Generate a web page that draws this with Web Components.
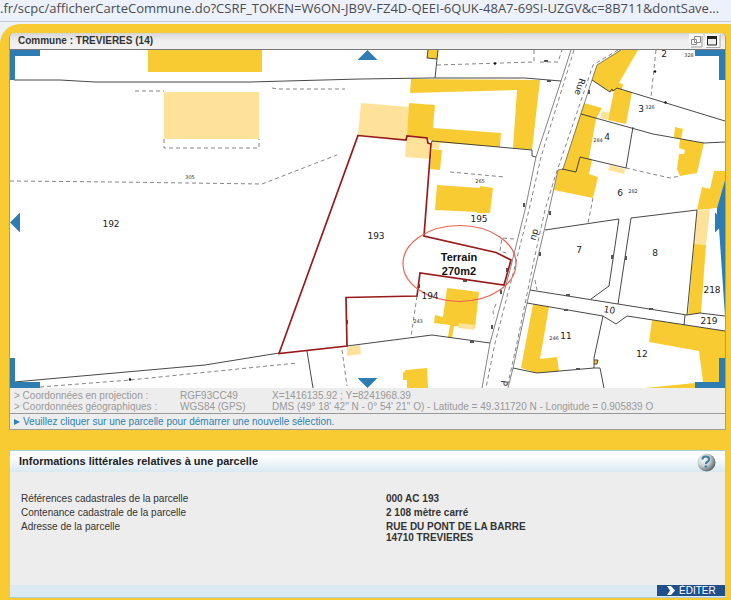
<!DOCTYPE html>
<html lang="fr">
<head>
<meta charset="utf-8">
<title>Commune : TREVIERES (14)</title>
<style>
  body { margin: 0; background: #eef1f5; font: 10px/11px "Liberation Sans", Arial, sans-serif; color: #333; }
  main { background: #f9cb33; border-top-left-radius: 20px; padding: 9px 5px 2px 9px; display: flex; flex-direction: column; gap: 20px; }
</style>
</head>
<body>
<address-bar></address-bar>
<main>
  <map-window>
    <span slot="title">Commune : TREVIERES (14)</span>
    <cadastre-map></cadastre-map>
    <coord-list slot="status"></coord-list>
    <span slot="message">Veuillez cliquer sur une parcelle pour démarrer une nouvelle sélection.</span>
  </map-window>
  <info-panel>
    <span slot="title">Informations littérales relatives à une parcelle</span>
    <parcel-details></parcel-details>
  </info-panel>
</main>

<script>
class AddressBar extends HTMLElement {
  constructor() {
    super();
    this.attachShadow({ mode: 'open' });
    this.shadowRoot.innerHTML = `
      <style>
        :host { display: block; background: #edf1fb; border-bottom: 1px solid #c3c7cd; height: 21px; margin-bottom: 2px; overflow: hidden; }
        input {
          display: block; width: 100%; box-sizing: border-box; border: 0; padding: 0; margin: 0;
          height: 17px; background: none; color: #494c50; font: 13px/17px "Open Sans", sans-serif;
        }
      </style>
      <input type="text" aria-label="Adresse" readonly
        value=".fr/scpc/afficherCarteCommune.do?CSRF_TOKEN=W6ON-JB9V-FZ4D-QEEI-6QUK-48A7-69SI-UZGV&amp;c=8B711&amp;dontSave...">
    `;
  }
}

class MapWindow extends HTMLElement {
  constructor() {
    super();
    this.attachShadow({ mode: 'open' });
    this.shadowRoot.innerHTML = `
      <style>
        :host { display: block; border: 1px solid #9d9d9d; border-top: 0; border-radius: 5px 5px 0 0; background: #ededed; }
        header {
          display: flex; align-items: center; height: 16px; padding: 0 4px 0 8px;
          background: linear-gradient(#d6d6d6, #efefef 50%, #f1f1f1);
          border-bottom: 1px solid #777; border-radius: 5px 5px 0 0;
        }
        h1 { flex: 1; margin: 0; font: bold 10px/16px "Liberation Sans", Arial, sans-serif; color: #333; }
        button { display: block; width: 16px; height: 14px; padding: 0; border: 0; background: none; }
        svg { display: block; }
        footer { display: flex; align-items: center; gap: 3px; height: 15px; padding-left: 4px; border-top: 1px solid #999; color: #2c83b4; }
      </style>
      <header>
        <h1><slot name="title"></slot></h1>
        <button type="button" aria-label="Restaurer">
          <svg width="16" height="14"><path d="M0 0h14v14H0z" fill="#fafafa"/><path d="M2 13h11V2" fill="none" stroke="#999"/><path d="M5.500 2.500h6v6h-6zM2.500 5.500h5v5h-5z" fill="#fff" stroke="#888"/></svg>
        </button>
        <button type="button" aria-label="Agrandir">
          <svg width="16" height="14"><path d="M0 0h15v14H0z" fill="#fafafa"/><path d="M1 13.500h14V1" fill="none" stroke="#aaa"/><path d="M2.500 3h9v8h-9z" fill="#eee" stroke="#222"/><path d="M2 2h10v3H2z" fill="#222"/></svg>
        </button>
      </header>
      <slot></slot>
      <slot name="status"></slot>
      <footer>
        <svg width="6" height="6" aria-hidden="true"><path d="M0 0l6 3-6 3z" fill="#2c83b4"/></svg>
        <slot name="message"></slot>
      </footer>
    `;
  }
}

// Parcel boundaries, buildings and labels, all in the same coordinate space
const BUILDINGS = [
  '148,50 262,50 262,72 148,72',
  '411,79 540,80 532,150 513,148 517,90 410,93',
  '409,103 435,105 433,128 501,133 500,147 433,142 427,138 407,136',
  '432,149 442,150 440,170 430,169',
  '437,185 480,188 480,186 493,188 490,213 477,213 477,212 435,210',
  '447,288 479,292 475,328 454,326 452,338 448,337 450,325 434,323 435,315 443,317',
  '403,373 406,370 427,368 428,388 407,388 407,380 403,380',
  '620,50 638,50 619,83 623,84 622,90 632,92 626,124 608,120 614,91 610,92 592,80 597,65',
  '584,103 602,108 596,119 589,158 592,160 589,174 598,177 593,198 554,190 558,170 563,169 580,115',
  '675,127 683,129 681,139 704,143 697,173 680,176 677,169 679,154 684,154 685,150 679,148 680,139 674,137',
  '714,171 725,171 725,180 717,208 697,210 702,187 710,189',
  '694,244 706,245 701,313 688,315',
  '652,320 725,331 725,388 645,388 695,383 703,382 699,351 649,342',
  '533,304 549,307 540,359 557,357 559,371 537,373 521,368'
];
const ANNEXES = [
  '164,92 259,92 259,139 164,139',
  '361,103 409,107 407,140 358,135',
  '406,140 407,137 427,138 429,143 431,144 430,159 405,157',
  '432,141 440,143 439,149 432,148',
  '602,111 610,113 607,120 600,118',
  '610,165 625,169 624,174 608,170',
  '697,211 710,209 706,245 694,244',
  '347,347 360,345 361,354 347,356'
];
const LIMITS = [
  '14,80 60,80 95,82 250,82 360,79 430,78 525,78 561,81',
  '437,59 435,78',
  '428,50 427,58 437,59 438,50',
  '431,144 432,141 532,150 532,156 536,157',
  '592,80 610,92 612,89 613,91 617,88 725,121',
  '581,114 653,134 704,143 725,142',
  '633,127 626,168',
  '562,169 576,172 580,157 626,168',
  '545,230 619,219 609,286 591,299',
  '618,304 631,218 697,210 687,315',
  '530,290 687,315 700,313 725,316',
  '685,315 684,325',
  '527,303 603,316 616,324 627,316 725,331',
  '603,316 594,358 594,368 600,368 604,388',
  '594,360 598,360 597,364 594,364',
  '513,368 537,373 594,368',
  '14,382 205,365 279,353',
  '347,346 432,335 490,343',
  '307,351 313,388'
];
const ROADSIDES = [
  '571,50 561,81 536,157 525,210 510,270 490,343 482,388',
  '621,50 597,65 592,80 563,169 558,170 549,210 527,303 513,368 508,388'
];
const DASHES = [
  '574,50 541,157 529,210 514,270 495,343 486,388',
  '618,50 593,65 588,80 554,180 545,210 534,260 517,343 507,388',
  '135,91 164,91', '272,88 279,89 345,89', '164,139 164,148 259,148 259,139',
  '10,181 115,182 262,184 337,155',
  '437,65 534,62 534,50', '540,62 558,62 562,50',
  '450,172 505,177', '656,50 651,97', '626,168 670,178 680,176',
  '593,198 588,223', '417,296 411,337', '342,350 347,386', '40,387 130,380 297,363',
  '514,239 502,238 500,251 509,254', '496,304 493,311 494,318', '535,280 537,290'
];
// [x, y, text]
const PARCELS = [
  [111, 227, '192'], [376, 239, '193'], [430, 299, '194'], [479, 222, '195'],
  [664, 57, '2'], [641, 112, '3'], [607, 140, '4'], [620, 196, '6'], [579, 253, '7'],
  [655, 256, '8'], [566, 339, '11'], [642, 357, '12'], [712, 293, '218'], [709, 324, '219']
];
const STREET_NUMBERS = [
  [190, 179, '305'], [480, 183, '265'], [418, 323, '243'], [689, 57, '328'], [650, 109, '326'],
  [598, 142, '284'], [633, 193, '282'], [554, 340, '246']
];
// little boundary markers: [x, y, vertical]
const MARKS = [
  [549, 81], [546, 61], [589, 92, 1], [524, 205, 1], [550, 213, 1], [540, 254, 1], [465, 281], [507, 270, 1],
  [419, 286, 1], [501, 292, 1], [492, 327, 1], [472, 342], [568, 295], [566, 310], [651, 309],
  [612, 257, 1], [626, 258, 1], [578, 369], [347, 322, 1]
];

class CadastreMap extends HTMLElement {
  constructor() {
    super();
    this.attachShadow({ mode: 'open' });
    const polys = list => list.map(p => `<polygon points="${p}"/>`).join('');
    const lines = list => list.map(p => `<polyline points="${p}"/>`).join('');
    const texts = list => list.map(([x, y, t]) => `<text x="${x}" y="${y}">${t}</text>`).join('');
    this.shadowRoot.innerHTML = `
      <style>
        :host { display: block; position: relative; background: #fff; }
        .plan { display: block; width: 100%; }
        .parcels { font: 9px "DejaVu Sans", sans-serif; text-anchor: middle; fill: #222; }
        .numbers { font: 5px "DejaVu Sans", sans-serif; text-anchor: middle; fill: #333; }
        .note { font: bold 11px "Liberation Sans", Arial, sans-serif; text-anchor: middle; fill: #111; }
        .pan { position: absolute; padding: 0; border: 0; background: #2d7db3; }
        .n, .s { width: 20px; height: 10px; left: 50%; margin-left: -10px; }
        .w, .e { width: 10px; height: 20px; top: 51%; margin-top: -10px; }
        .n { top: 0; clip-path: polygon(50% 0, 100% 100%, 0 100%); }
        .s { bottom: 0; clip-path: polygon(0 0, 100% 0, 50% 100%); }
        .w { left: 0; clip-path: polygon(0 50%, 100% 0, 100% 100%); }
        .e { right: 0; clip-path: polygon(0 0, 100% 50%, 0 100%); }
      </style>
      <svg class="plan" viewBox="10 50 715 338" role="img" aria-label="Plan cadastral">
        <g fill="#fee299">${polys(ANNEXES)}</g>
        <g fill="#f9cb33">${polys(BUILDINGS)}<path d="M428 50h10l-1 9-10-1zM594 360h4l-1 4h-3z"/></g>
        <path d="M459 323l16 2-1 5-16-2z" fill="#fee299"/>
        <path d="M725 180L717 208V229L719 228L725 316Z" fill="#2d7db3"/>
        <g fill="none" stroke="#666" stroke-width=".8">${lines(ROADSIDES)}</g>
        <g fill="none" stroke="#777" stroke-width=".9" stroke-dasharray="4 3">${lines(DASHES)}</g>
        <g fill="none" stroke="#333" stroke-width=".9">${lines(LIMITS)}</g>
        <g fill="#555">${MARKS.map(([x, y, v]) => v
          ? `<rect x="${x - 1}" y="${y - 2}" width="2" height="4"/>`
          : `<rect x="${x - 2}" y="${y - 1}" width="4" height="2"/>`).join('')}</g>
        <g fill="#111"><circle cx="495" cy="63.500" r="1.200"/><circle cx="655" cy="71.500" r="1.200"/><circle cx="665.500" cy="102.500" r="1.200"/><circle cx="130" cy="379.500" r="1.200"/></g>
        <polygon fill="none" stroke="#981b1b" stroke-width="1.700"
          points="358,135.500 406,140 407,136 427,138 428,143 431,144 424,236 496,252.500 511,260 504,285 420,273 417,296 346,297.500 347,346 279,353.500"/>
        <ellipse cx="459.500" cy="263.500" rx="56.500" ry="38" fill="none" stroke="#ee6350" stroke-width="1.200"/>
        <g class="parcels">
          ${texts(PARCELS)}
          <text transform="translate(609 313) rotate(9)">10</text>
          <text transform="translate(577 86) rotate(107)">Rue</text>
          <text transform="translate(532 234) rotate(104)">du</text>
          <text transform="translate(501 383) rotate(96)">P</text>
        </g>
        <g class="numbers">${texts(STREET_NUMBERS)}</g>
        <g class="note"><text x="459" y="261">Terrain</text><text x="459" y="275">270m2</text></g>
        <path fill="#2d7db3" d="M10 50h30v6H15v24h-5zM695 50h30v30h-6V56h-24zM10 358h5v24h25v6H10zM719 358h6v30h-30v-6h24z"/>
      </svg>
      <button type="button" class="pan n" aria-label="Nord"></button>
      <button type="button" class="pan s" aria-label="Sud"></button>
      <button type="button" class="pan w" aria-label="Ouest"></button>
      <button type="button" class="pan e" aria-label="Est"></button>
    `;
  }
}

class CoordList extends HTMLElement {
  constructor() {
    super();
    this.attachShadow({ mode: 'open' });
    this.shadowRoot.innerHTML = `
      <style>
        :host { display: block; padding: 2px 4px 1px; color: #999; }
        table { width: 100%; border-collapse: collapse; table-layout: fixed; font: inherit; }
        th, td { padding: 0; text-align: left; font-weight: normal; white-space: nowrap; }
        th { width: 166px; }
        .sys { width: 92px; }
      </style>
      <table>
        <tr><th scope="row">&gt; Coordonnées en projection :</th><td class="sys">RGF93CC49</td><td>X=1416135.92 ; Y=8241968.39</td></tr>
        <tr><th scope="row">&gt; Coordonnées géographiques :</th><td>WGS84 (GPS)</td><td>DMS (49° 18' 42" N - 0° 54' 21" O) - Latitude = 49.311720 N - Longitude = 0.905839 O</td></tr>
      </table>
    `;
  }
}

class InfoPanel extends HTMLElement {
  constructor() {
    super();
    this.attachShadow({ mode: 'open' });
    this.shadowRoot.innerHTML = `
      <style>
        :host { display: block; border: 1px solid #a9cfe0; background: #ededed; }
        header { display: flex; align-items: center; height: 21px; padding: 0 9px; background: linear-gradient(#fff 25%, #d9e9f1); }
        h2 { flex: 1; margin: 0; font: bold 11px/21px "Liberation Sans", Arial, sans-serif; color: #222; }
        button { border: 0; padding: 0; }
        .help { background: none; height: 20px; }
        svg { display: block; }
        .body { min-height: 92px; padding: 21px 11px 0; }
        footer { display: flex; justify-content: flex-end; background: #dbe9f1; height: 11px; border-bottom: 1px solid #dbe9f1; }
        .edit {
          display: flex; align-items: center; gap: 4px; width: 68px; padding-left: 10px;
          background: #20508b; color: #fff; font: 10px/11px "Liberation Sans", Arial, sans-serif;
        }
      </style>
      <header>
        <h2><slot name="title"></slot></h2>
        <button type="button" class="help" aria-label="Aide">
          <svg width="20" height="20" viewBox="0 0 20 20">
            <defs><radialGradient id="ball" cx=".35" cy=".35" r=".7"><stop offset="0" stop-color="#f7f9fa"/><stop offset=".5" stop-color="#cbd2d6"/><stop offset="1" stop-color="#555d63"/></radialGradient></defs>
            <circle cx="10.500" cy="10.500" r="9" fill="url(#ball)"/>
            <path d="M6.500 7.500q0-3 3.300-3t3.300 2.700q0 1.600-1.700 2.600-1.400.8-1.400 2.200" fill="none" stroke="#43819f" stroke-width="2.200"/>
            <circle cx="9.900" cy="14.600" r="1.300" fill="#43819f"/>
          </svg>
        </button>
      </header>
      <div class="body"><slot></slot></div>
      <footer>
        <button type="button" class="edit">
          <svg width="8" height="9" aria-hidden="true"><path d="M0 0h4l4 4.500L4 9H0l3-4.500z" fill="#fff"/></svg>
          <span>ÉDITER</span>
        </button>
      </footer>
    `;
  }
}

class ParcelDetails extends HTMLElement {
  constructor() {
    super();
    this.attachShadow({ mode: 'open' });
    this.shadowRoot.innerHTML = `
      <style>
        :host { display: block; }
        table { width: 100%; border-collapse: collapse; font: inherit; }
        th, td { padding: 0 0 3px; text-align: left; vertical-align: top; font-weight: normal; }
        th { width: 365px; }
        td { font-weight: bold; }
      </style>
      <table>
        <tr><th scope="row">Références cadastrales de la parcelle</th><td>000 AC 193</td></tr>
        <tr><th scope="row">Contenance cadastrale de la parcelle</th><td>2 108 mètre carré</td></tr>
        <tr><th scope="row">Adresse de la parcelle</th><td>RUE DU PONT DE LA BARRE<br>14710 TREVIERES</td></tr>
      </table>
    `;
  }
}

customElements.define('address-bar', AddressBar);
customElements.define('map-window', MapWindow);
customElements.define('cadastre-map', CadastreMap);
customElements.define('coord-list', CoordList);
customElements.define('info-panel', InfoPanel);
customElements.define('parcel-details', ParcelDetails);
</script>
</body>
</html>
